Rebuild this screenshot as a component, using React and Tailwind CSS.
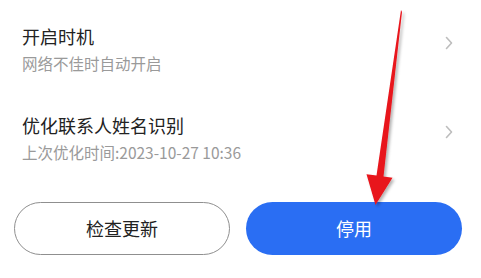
import { Fragment } from 'react'

const rows = [
  { title: '开启时机', sub: '网络不佳时自动开启' },
  { title: '优化联系人姓名识别', sub: '上次优化时间:2023-10-27 10:36' },
]

function Chevron() {
  return (
    <svg width="8" height="14" viewBox="0 0 8 14" className="mt-[12px] shrink-0">
      <polyline points="1.5,1.5 6.5,7 1.5,12.5" fill="none" stroke="#bdbdbd" strokeWidth="1.6" strokeLinecap="round" strokeLinejoin="round" />
    </svg>
  )
}

export default function App() {
  return (
    <div
      className="relative w-[481px] h-[278px] overflow-hidden bg-white"
      style={{ fontFamily: '"Noto Sans CJK SC", "Noto Sans", sans-serif' }}
    >
      <div className="flex flex-col gap-[40px] pt-[24px] pl-[22px] pr-[28px]">
        {rows.map((row) => (
          <div key={row.title} className="flex items-start justify-between">
            <div className="flex flex-col gap-[5px]">
              <div className="text-[18px] leading-[24px] text-[#222]">{row.title}</div>
              <div className="text-[15.5px] leading-[20px] text-[#9a9a9a]">{row.sub}</div>
            </div>
            <Chevron />
          </div>
        ))}
      </div>

      <div className="flex gap-[16px] pl-[14px] mt-[40px]">
        <button className="w-[216px] h-[53px] rounded-full border border-[#8f8f8f] bg-white text-[18px] text-[#222]">
          检查更新
        </button>
        <button className="w-[216px] h-[53px] rounded-full bg-[#2a6ef3] text-[18px] text-white">
          停用
        </button>
      </div>

      {/* red annotation arrow */}
      <svg className="absolute left-0 top-0 pointer-events-none" width="481" height="278">
        <defs>
          <filter id="sh" x="-50%" y="-10%" width="200%" height="120%">
            <feDropShadow dx="2" dy="2" stdDeviation="1.5" floodColor="#000" floodOpacity="0.3" />
          </filter>
        </defs>
        <polygon
          points="401,10 402,12 383.5,176.5 392.5,177.7 375.5,205 366.5,174.3 376.5,175.5"
          fill="#e8141b"
          filter="url(#sh)"
        />
      </svg>
    </div>
  )
}
